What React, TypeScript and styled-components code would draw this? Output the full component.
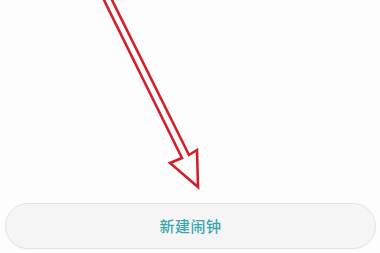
import styled, { createGlobalStyle } from 'styled-components';

const Global = createGlobalStyle`
    html, body {
        margin: 0;
        padding: 0;
        background: #fdfdfd;
    }
    body {
        font-family: "Noto Sans CJK SC", "Noto Sans", sans-serif;
    }
`;

const Screen = styled.div`
    width: 380px;
    height: 253px;
    display: flex;
    flex-direction: column;
    background: #fdfdfd;
    overflow: hidden;
`;

const Canvas = styled.div`
    height: 203px;
    flex: none;
`;

const Footer = styled.div`
    padding: 0 4px 0 5px;
`;

const PillButton = styled.button`
    width: 100%;
    height: 46px;
    border-radius: 23px;
    border: 1px solid #e4e4e4;
    background: #f5f5f5;
    color: #38a6ae;
    font-family: "Noto Sans CJK SC", "Noto Sans", sans-serif;
    font-size: 15px;
    font-weight: 500;
    letter-spacing: 0.5px;
    display: flex;
    align-items: center;
    justify-content: center;
    padding: 0 0 2px 0;
    box-shadow: 0 1px 1px rgba(0, 0, 0, 0.03);
`;

const Arrow = () => (
    <svg width="380" height="203" viewBox="0 0 380 203">
        <polygon
            points="102,-4 182,158 170,163 198,187 197,150 189,155 110,-4"
            fill="none"
            stroke="#d21f2a"
            strokeWidth="2.6"
            strokeLinejoin="miter"
        />
    </svg>
);

export default function App() {
    return (
        <>
            <Global />
            <Screen>
                <Canvas>
                    <Arrow />
                </Canvas>
                <Footer>
                    <PillButton type="button">新建闹钟</PillButton>
                </Footer>
            </Screen>
        </>
    );
}
